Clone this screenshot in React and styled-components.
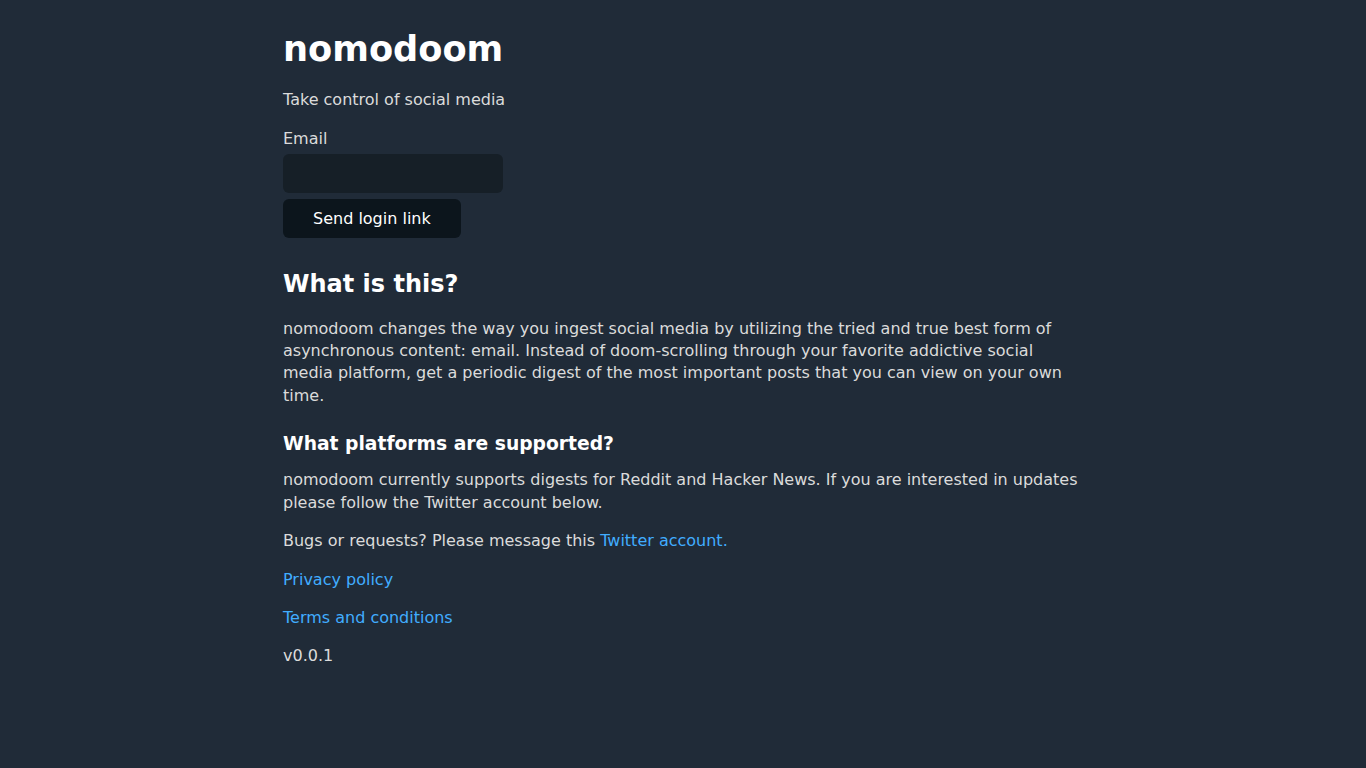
import React from 'react'
import styled, { createGlobalStyle } from 'styled-components'

const GlobalStyle = createGlobalStyle`
  html {
    background: #202b38;
  }
  body {
    font-family: "DejaVu Sans", "Noto Sans", sans-serif;
    line-height: 1.4;
    max-width: 800px;
    margin: 24px auto 20px;
    padding: 0 10px;
    color: #dbdbdb;
    background: #202b38;
    font-size: 16px;
  }
`

const Page = styled.main`
  display: block;
`

const Title = styled.h1`
  font-size: 2.2em;
  margin: 0 0 12px;
  color: #fff;
`

const Heading = styled.h2`
  font-size: ${({ small }) => (small ? '1.17em' : '1.5em')};
  margin: 24px 0 12px;
  color: #fff;
`

const Text = styled.p`
  margin: ${({ tight }) => (tight ? '12px 0 16px' : '16px 0')};
`

const Form = styled.form`
  margin: 0;
`

const Label = styled.label`
  display: inline-block;
  vertical-align: middle;
  margin-bottom: 4px;
`

const Input = styled.input`
  display: block;
  font-family: inherit;
  font-size: inherit;
  color: #fff;
  background: #161f27;
  border: none;
  border-radius: 6px;
  outline: none;
  padding: 10px;
  margin: 0 6px 6px 0;
  width: 200px;
`

const Button = styled.button`
  font-family: inherit;
  font-size: inherit;
  color: #fff;
  background: #0c151c;
  border: none;
  border-radius: 6px;
  padding: 10px 30px;
  margin: 0 6px 6px 0;
  cursor: pointer;
`

const Link = styled.a`
  color: #41adff;
  text-decoration: none;
`

export default function App() {
  return (
    <Page>
      <GlobalStyle />
      <Title>nomodoom</Title>
      <Text>Take control of social media</Text>
      <Form onSubmit={(e) => e.preventDefault()}>
        <Label htmlFor="email">Email</Label>
        <Input id="email" type="email" />
        <Button type="submit">Send login link</Button>
      </Form>
      <Heading>What is this?</Heading>
      <Text>
        nomodoom changes the way you ingest social media by utilizing the tried and true best form of
        asynchronous content: email. Instead of doom-scrolling through your favorite addictive social
        media platform, get a periodic digest of the most important posts that you can view on your own
        time.
      </Text>
      <Heading as="h3" small>What platforms are supported?</Heading>
      <Text tight>
        nomodoom currently supports digests for Reddit and Hacker News. If you are interested in updates
        please follow the Twitter account below.
      </Text>
      <Text>
        Bugs or requests? Please message this <Link href="#">Twitter account.</Link>
      </Text>
      <Text>
        <Link href="#">Privacy policy</Link>
      </Text>
      <Text>
        <Link href="#">Terms and conditions</Link>
      </Text>
      <Text>v0.0.1</Text>
    </Page>
  )
}
